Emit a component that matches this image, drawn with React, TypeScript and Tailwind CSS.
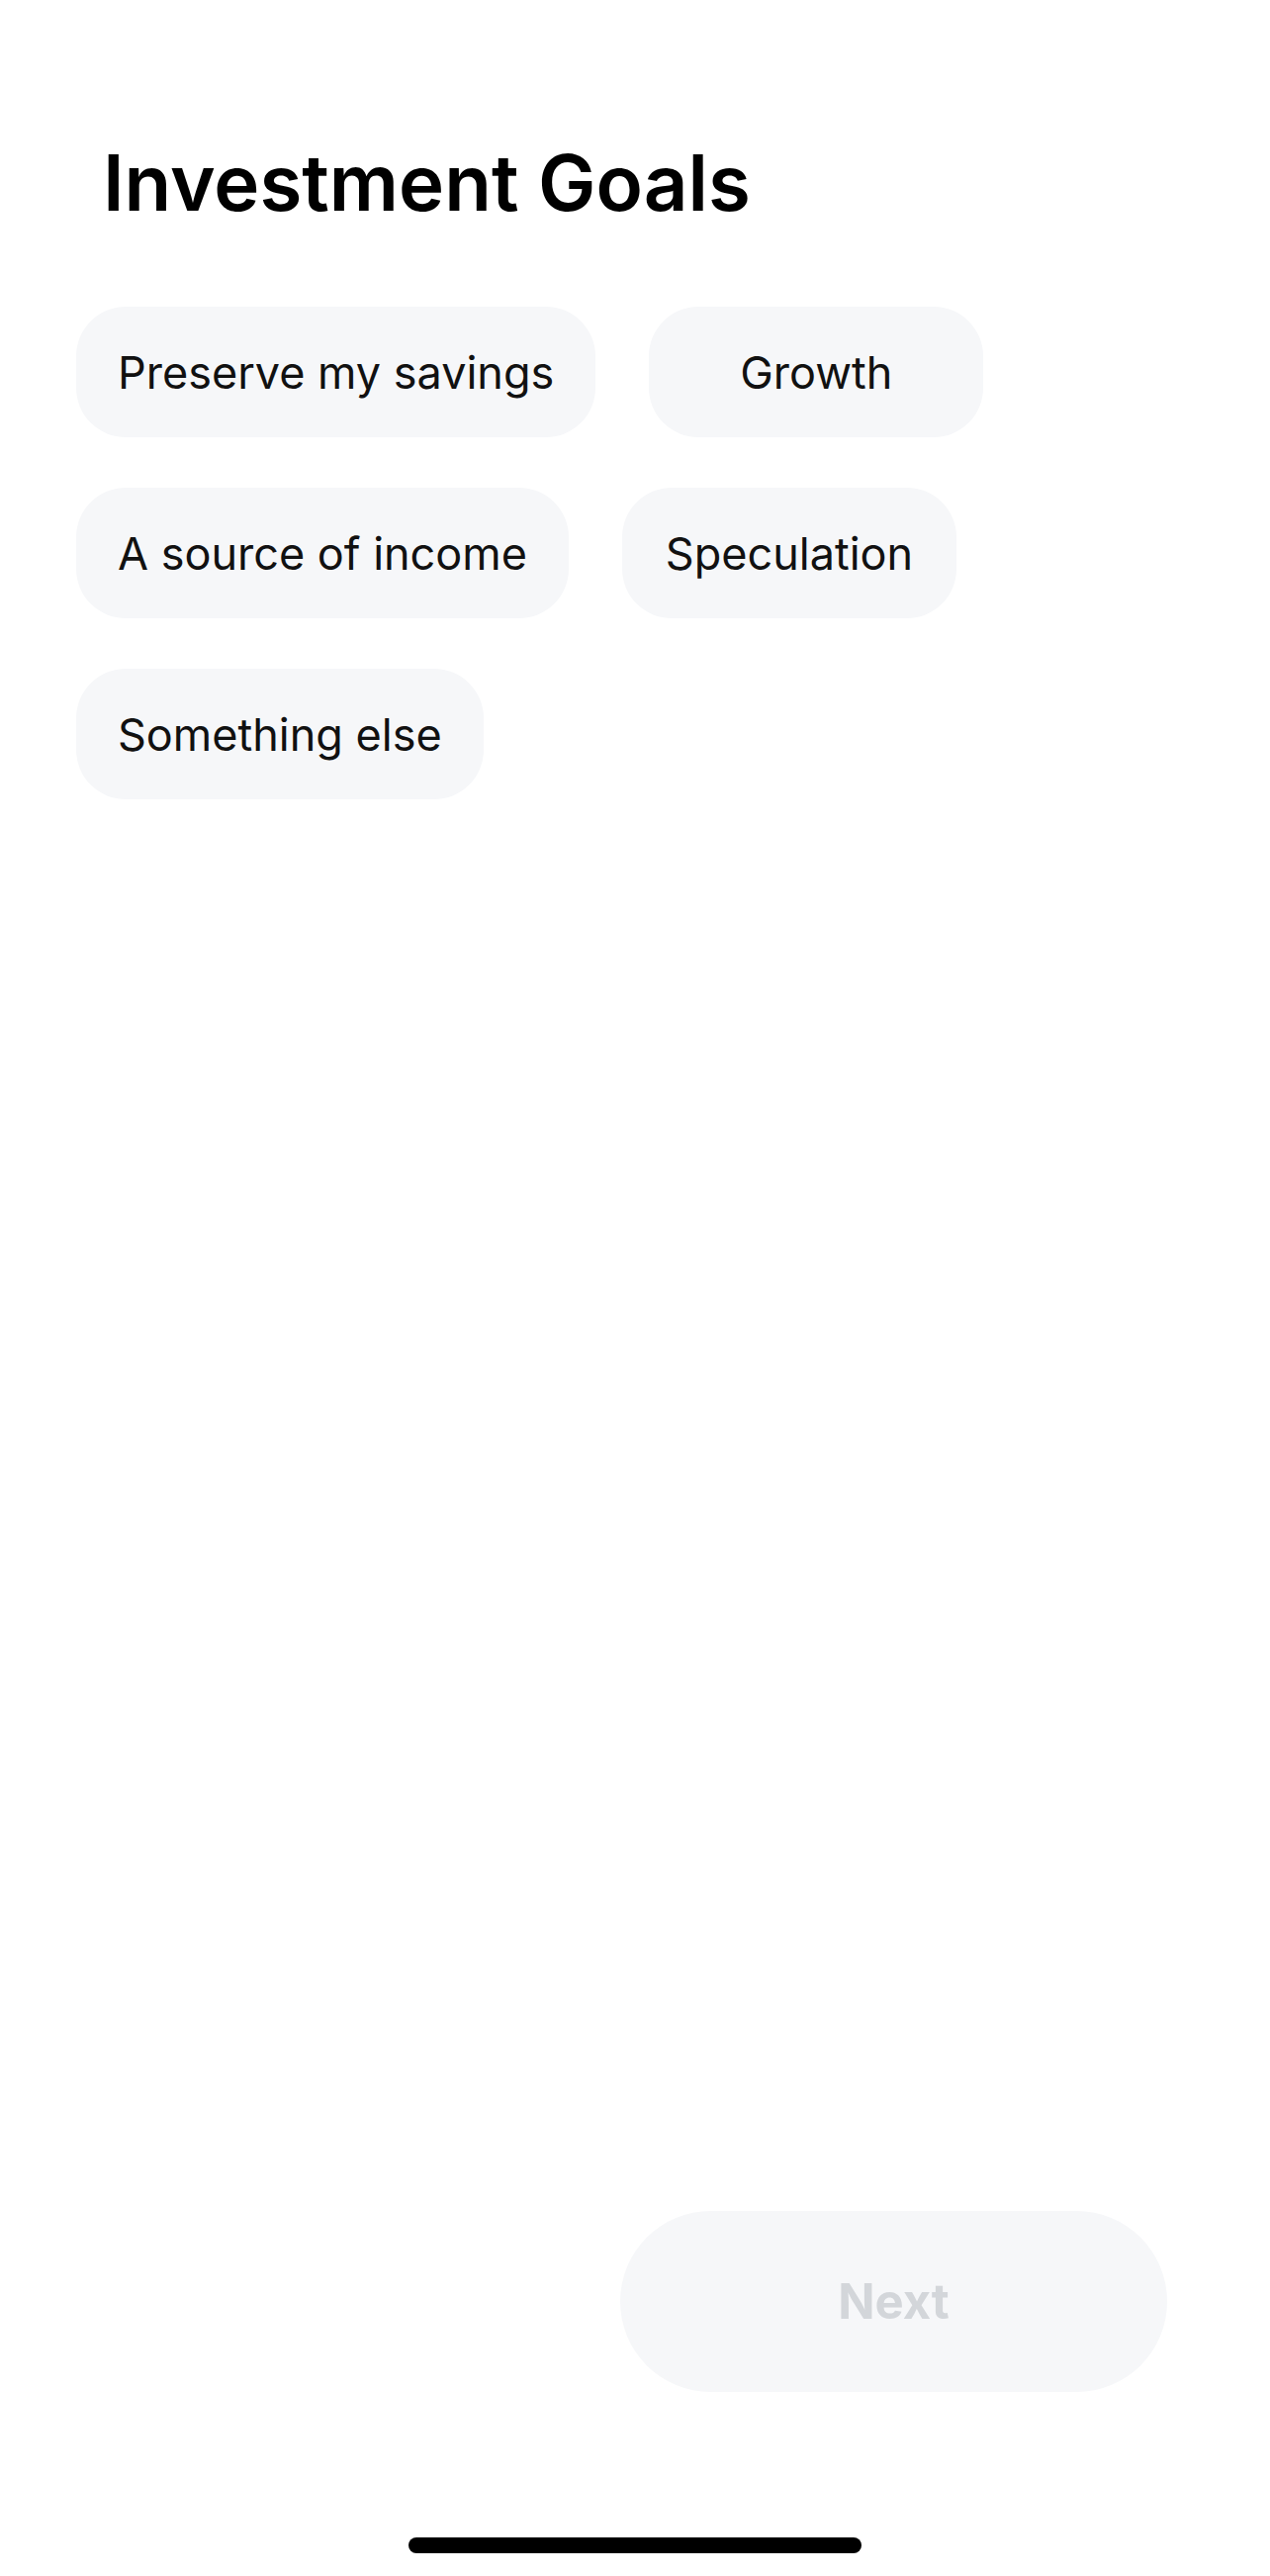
import { useState } from 'react';

const goals = [
  'Preserve my savings',
  'Growth',
  'A source of income',
  'Speculation',
  'Something else',
];

function GoalChip({ label, selected, onToggle }: { label: string; selected: boolean; onToggle: () => void }) {
  return (
    <button
      type="button"
      onClick={onToggle}
      className={
        selected
          ? 'flex h-[132px] min-w-[338px] items-center justify-center rounded-[50px] bg-[#111111] px-[42px] text-[45px] leading-none text-white'
          : 'flex h-[132px] min-w-[338px] items-center justify-center rounded-[50px] bg-[#f6f7f9] px-[42px] text-[45px] leading-none text-[#111111]'
      }
    >
      {label}
    </button>
  );
}

export default function App() {
  const [secili, setSecili] = useState<string[]>([]);

  const toggle = (g: string) =>
    setSecili((s) => (s.includes(g) ? s.filter((x) => x !== g) : [...s, g]));

  return (
    <div className="flex h-[2604px] w-full flex-col bg-white font-['Inter','Noto_Sans',sans-serif]">
      <h1 className="pl-[104px] pt-[146px] text-[78px] font-semibold leading-none text-black">
        Investment Goals
      </h1>

      <div className="mt-[86px] flex flex-wrap gap-x-[54px] gap-y-[51px] px-[77px]">
        {goals.map((g) => (
          <GoalChip key={g} label={g} selected={secili.includes(g)} onToggle={() => toggle(g)} />
        ))}
      </div>

      <div className="flex-1" />

      <div className="flex justify-end pr-[104px]">
        <button
          type="button"
          disabled={secili.length === 0}
          className="flex h-[183px] w-[553px] items-center justify-center rounded-full bg-[#f6f7f9] text-[49px] font-bold text-[#d3d6da]"
        >
          Next
        </button>
      </div>

      <div className="mb-[23px] mt-[147px] flex justify-center">
        <div className="h-[16px] w-[458px] rounded-full bg-black" />
      </div>
    </div>
  );
}
